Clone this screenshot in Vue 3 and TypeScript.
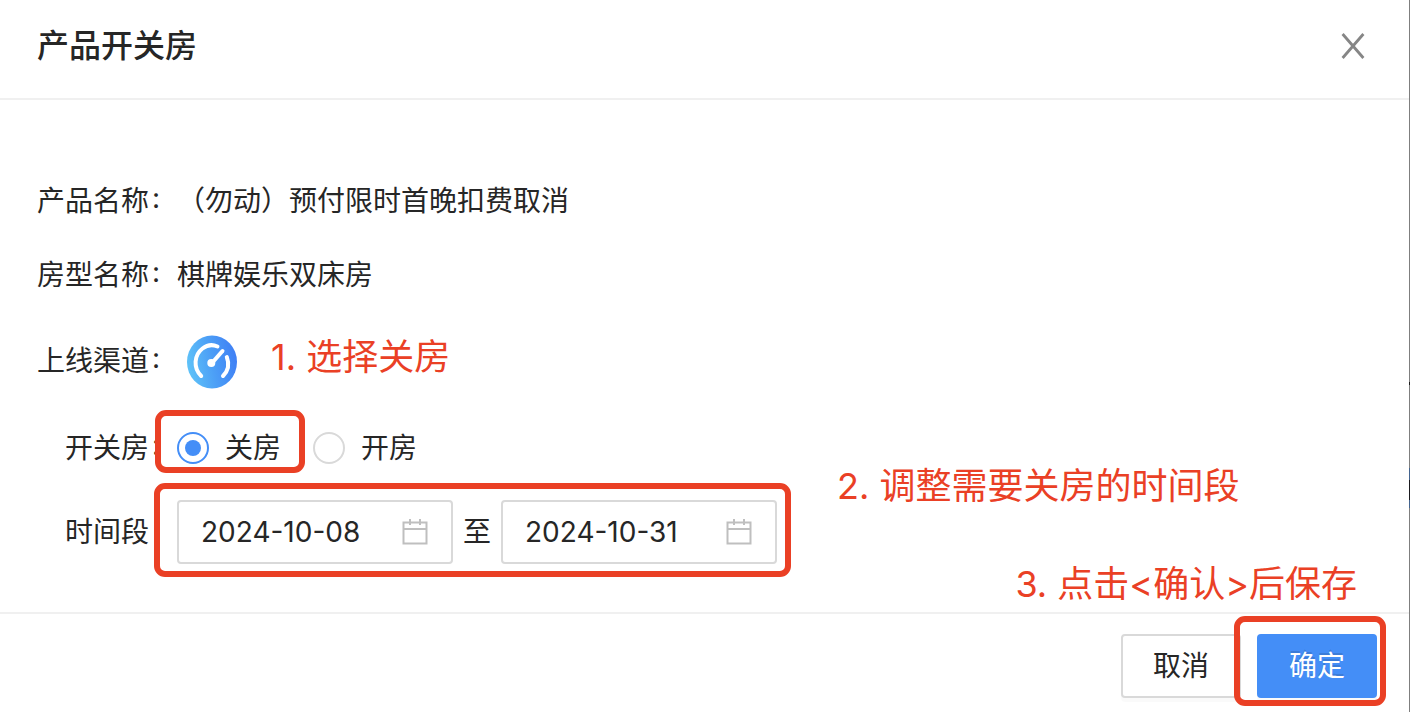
<script setup lang="ts">
import { ref } from 'vue'

type RoomState = 'close' | 'open'

const roomState = ref<RoomState>('close')
const startDate = ref('2024-10-08')
const endDate = ref('2024-10-31')
</script>

<template>
  <section class="dialog" role="dialog" aria-labelledby="dialog-title">
    <header class="header">
      <h1 id="dialog-title" class="title">产品开关房</h1>
      <button class="close" type="button" aria-label="关闭">
        <svg width="24" height="26" viewBox="0 0 24 26" fill="none" stroke="#868686" stroke-width="2.8">
          <path d="M1.6 1 22.4 25M22.4 1 1.6 25" />
        </svg>
      </button>
    </header>

    <form id="room-form" class="body" @submit.prevent>
      <div class="row">
        <span class="label">产品名称<i class="colon">:</i></span>
        <span>（勿动）预付限时首晚扣费取消</span>
      </div>

      <div class="row">
        <span class="label">房型名称<i class="colon">:</i></span>
        <span>棋牌娱乐双床房</span>
      </div>

      <div class="row row-channel">
        <span class="label">上线渠道<i class="colon">:</i></span>
        <svg class="channel" width="50" height="54" viewBox="0 0 50 54" fill="none">
          <defs>
            <linearGradient id="channel-fill" x1="0" y1="0.6" x2="1" y2="0.4">
              <stop offset="0" stop-color="#5fc3f8" />
              <stop offset="0.5" stop-color="#4c9ff6" />
              <stop offset="1" stop-color="#3f7ff5" />
            </linearGradient>
          </defs>
          <ellipse cx="25" cy="27" rx="25" ry="26.5" fill="url(#channel-fill)" />
          <g stroke="#fff" stroke-width="4" stroke-linecap="round">
            <path d="M14.200 41C6 33 7 20 15.500 13.500C20 10 26 9.500 30.500 11.500" />
            <path d="M39.800 22C42.500 29 41 36 36 41" />
            <path d="M25 28 35.500 16" />
          </g>
          <circle cx="24.300" cy="28" r="4" fill="#fff" />
        </svg>
        <span class="note note-first">1. 选择关房</span>
      </div>

      <div class="row" role="radiogroup" aria-label="开关房">
        <span class="label">开关房<i class="colon">:</i></span>
        <label class="option marked">
          <input v-model="roomState" type="radio" name="room-state" value="close" />
          <span>关房</span>
          <span class="frame frame-option" aria-hidden="true"></span>
        </label>
        <label class="option">
          <input v-model="roomState" type="radio" name="room-state" value="open" />
          <span>开房</span>
        </label>
      </div>

      <div class="row row-range">
        <label class="label label-range" for="start-date">时间段</label>
        <div class="range">
          <div class="date">
            <input id="start-date" v-model="startDate" type="text" />
            <svg width="28" height="28" viewBox="0 0 28 28" fill="none" stroke="#bfbfbf" stroke-width="2">
              <path d="M2.500 4.500h23v21h-23zM2.500 11h23M9 1v6M19 1v6" />
            </svg>
          </div>
          <label class="to" for="end-date">至</label>
          <div class="date">
            <input id="end-date" v-model="endDate" type="text" />
            <svg width="28" height="28" viewBox="0 0 28 28" fill="none" stroke="#bfbfbf" stroke-width="2">
              <path d="M2.500 4.500h23v21h-23zM2.500 11h23M9 1v6M19 1v6" />
            </svg>
          </div>
          <span class="frame frame-range" aria-hidden="true"></span>
        </div>
        <span class="note note-second">2. 调整需要关房的时间段</span>
      </div>
    </form>

    <footer class="footer">
      <span class="note note-third">3. 点击&lt;确认&gt;后保存</span>
      <button class="btn" type="button">取消</button>
      <div class="marked">
        <button class="btn primary" type="submit" form="room-form">确定</button>
        <span class="frame frame-ok" aria-hidden="true"></span>
      </div>
    </footer>
  </section>
</template>

<style>
body {
  margin: 0;
  background: #fff;
}
</style>

<style scoped>
.dialog {
  position: relative;
  box-sizing: border-box;
  min-height: 100vh;
  padding-right: 1px;
  overflow: hidden;
  background: #fff;
  color: #262626;
  font: 400 28px/41px Inter, "Noto Sans CJK SC", sans-serif;
}

/* Sliver of the dimmed page behind the dialog */
.dialog::after {
  content: "";
  position: absolute;
  top: 0;
  right: 0;
  bottom: 0;
  width: 1px;
  background: linear-gradient(
    #7f7f7f 382px, #1c1c1c 382px, #1c1c1c 385px,
    #7f7f7f 385px, #7f7f7f 468px, #43638e 468px, #43638e 480px,
    #1a1a1f 480px, #1a1a1f 500px, #43638e 500px, #43638e 508px,
    #7f7f7f 508px
  );
}

.header {
  display: flex;
  align-items: center;
  justify-content: space-between;
  box-sizing: border-box;
  height: 100px;
  padding: 0 36px 6px 37px;
  border-bottom: 2px solid #f0f0f0;
}

.title {
  margin: 0;
  font-size: 32px;
  line-height: 44px;
  font-weight: 500;
}

.close {
  display: flex;
  padding: 8px;
  border: 0;
  background: none;
  cursor: pointer;
}

.body {
  display: flex;
  flex-direction: column;
  gap: 18px;
  padding: 73px 37px 42px;
}

.row {
  position: relative;
  display: flex;
  align-items: center;
  height: 56px;
}

.row-channel {
  height: 81px;
}

.row-range {
  height: 76px;
}

.label {
  flex: none;
  box-sizing: border-box;
  width: 140px;
  text-align: right;
}

.label-range {
  padding-right: 28px;
}

.colon {
  display: inline-block;
  box-sizing: border-box;
  width: 28px;
  padding-left: 3px;
  font-style: normal;
  font-feature-settings: "case";
  text-align: left;
}

.channel {
  margin-left: 10px;
}

.marked {
  position: relative;
}

.option {
  display: flex;
  align-items: center;
  gap: 16px;
  margin-right: 32px;
}

.option input {
  appearance: none;
  display: grid;
  place-items: center;
  box-sizing: border-box;
  width: 32px;
  height: 32px;
  margin: 0;
  border: 2px solid #d9d9d9;
  border-radius: 50%;
  background: #fff;
}

.option input:checked {
  border-color: #448ef7;
}

.option input:checked::before {
  content: "";
  width: 16px;
  height: 16px;
  border-radius: 50%;
  background: #448ef7;
}

.range {
  position: relative;
  display: flex;
  align-items: center;
}

.date {
  display: flex;
  align-items: center;
  box-sizing: border-box;
  width: 276px;
  height: 64px;
  padding: 0 22px;
  border: 2px solid #d9d9d9;
  border-radius: 4px;
}

.date input {
  flex: 1;
  min-width: 0;
  padding: 0;
  border: 0;
  outline: 0;
  background: none;
  color: inherit;
  font: inherit;
}

.to {
  width: 48px;
  text-align: center;
}

.frame {
  position: absolute;
  border: 6px solid #ea4025;
  border-radius: 11px;
  pointer-events: none;
}

.frame-option {
  inset: -18px -24px -4px -22px;
}

.frame-range {
  inset: -17px -14px -13px -23px;
}

.frame-ok {
  inset: -18px -9px -8px -23px;
}

.note {
  position: absolute;
  color: #ea4025;
  font-size: 36px;
  line-height: 48px;
  white-space: nowrap;
}

.note-first {
  top: 12px;
  left: 234px;
}

.note-second {
  top: -32px;
  left: 800px;
}

.note-third {
  top: -54px;
  right: 52px;
}

.footer {
  position: relative;
  display: flex;
  justify-content: flex-end;
  gap: 16px;
  padding: 20px 32px 14px;
  border-top: 2px solid #f0f0f0;
}

.btn {
  display: block;
  width: 120px;
  height: 64px;
  padding: 0;
  border: 2px solid #d9d9d9;
  border-radius: 4px;
  background: #fff;
  color: inherit;
  font: inherit;
  box-shadow: 0 4px 0 rgba(0, 0, 0, 0.02);
  cursor: pointer;
}

.primary {
  border-color: #448ef7;
  background: #448ef7;
  color: #fff;
  text-shadow: 0 -2px 0 rgba(0, 0, 0, 0.12);
}
</style>
